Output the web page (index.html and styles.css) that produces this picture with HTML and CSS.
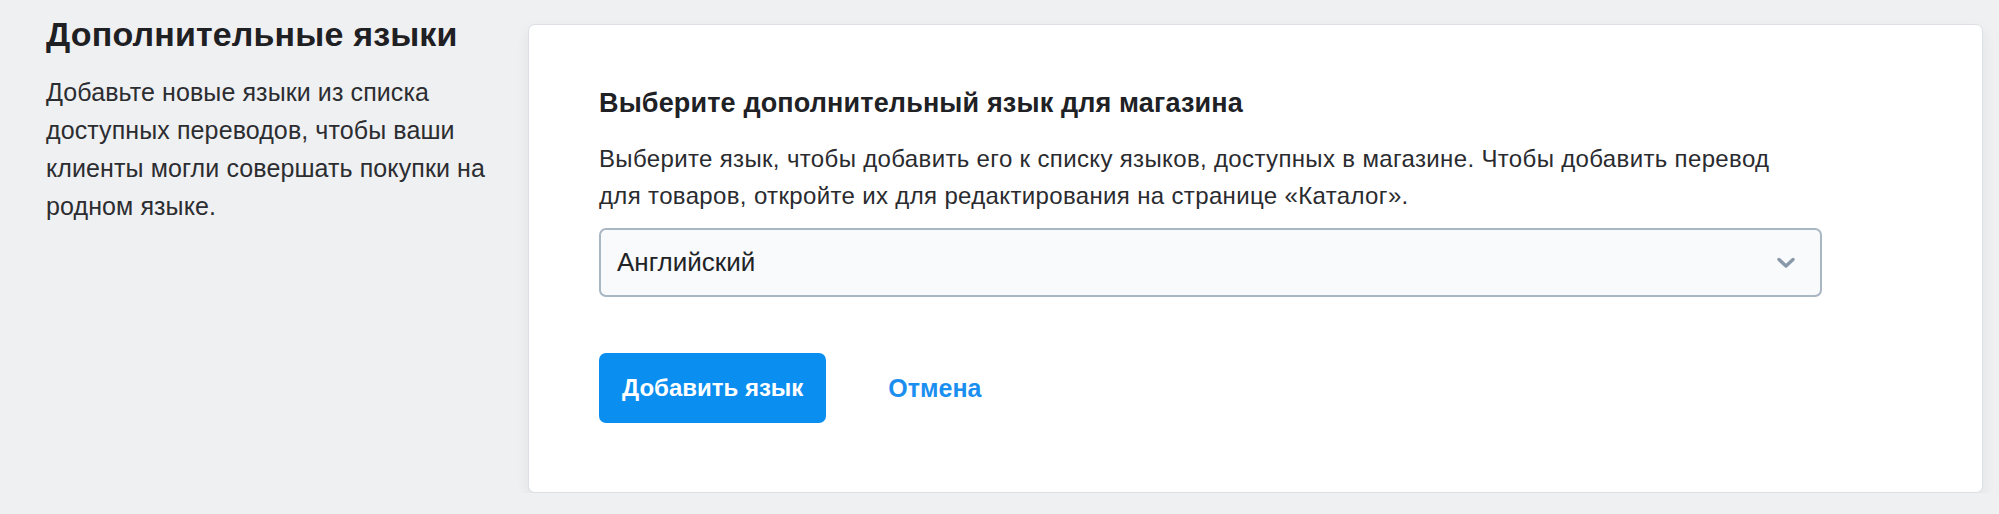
FILE: index.html
```html
<!DOCTYPE html>
<html lang="ru">
<head>
    <meta charset="UTF-8">
    <meta name="viewport" content="width=device-width, initial-scale=1.0">
    <title>Дополнительные языки</title>
    <link rel="stylesheet" href="styles.css">
</head>
<body>
    <div class="settings_row">
        <div class="settings_info">
            <h2 class="info_tit">Дополнительные языки</h2>
            <p class="info_txt">Добавьте новые языки из списка доступных переводов, чтобы ваши клиенты могли совершать покупки на родном языке.</p>
        </div>
        <div class="card">
            <h3 class="card_tit">Выберите дополнительный язык для магазина</h3>
            <p class="card_txt">Выберите язык, чтобы добавить его к списку языков, доступных в магазине. Чтобы добавить перевод для товаров, откройте их для редактирования на странице «Каталог».</p>
            <div class="select_box">
                <span class="select_val">Английский</span>
                <svg class="select_arrow" width="20" height="12" viewBox="0 0 20 12">
                    <polyline points="3,2.5 10,9 17,2.5" fill="none" stroke="#8a99aa" stroke-width="3.4" stroke-linecap="round" stroke-linejoin="round"/>
                </svg>
            </div>
            <div class="btn_box">
                <button type="button" class="btn_add">Добавить язык</button>
                <a href="#" class="btn_cancel">Отмена</a>
            </div>
        </div>
    </div>
</body>
</html>
```

FILE: styles.css
```css
* { box-sizing: border-box; }
body { margin: 0; background-color: #eff0f2; font-family: "Liberation Sans", Arial, sans-serif; color: #222327; }

.settings_row { display: flex; align-items: flex-start; padding: 14px 16px 0 46px; }
.settings_info { width: 482px; flex-shrink: 0; padding-right: 14px; }
.info_tit { margin: 0; font-size: 34px; line-height: 41px; font-weight: bold; color: #1f2023; letter-spacing: 0.15px; }
.info_txt { margin: 18px 0 0; font-size: 25px; line-height: 38px; color: #2c2d31; letter-spacing: 0.1px; }

.card { flex: 1; margin-top: 10px; padding: 62px 160px 69px 70px; background: #fff; border: 1px solid #dce0e5; border-radius: 7px; box-shadow: 0 6px 14px rgba(30, 40, 60, 0.07); }
.card_tit { margin: 0; font-size: 27px; line-height: 33px; font-weight: bold; color: #202125; letter-spacing: 0.15px; }
.card_txt { max-width: 1195px; margin: 20px 0 0; font-size: 24px; line-height: 37px; color: #2a2b2f; letter-spacing: 0.35px; }

.select_box { display: flex; align-items: center; justify-content: space-between; height: 69px; margin-top: 14px; padding: 0 24px 0 16px; background: #f9fafb; border: 2px solid #a9b6c3; border-radius: 7px; }
.select_val { font-size: 26px; color: #222327; }
.select_arrow { display: block; }

.btn_box { display: flex; align-items: center; gap: 62px; margin-top: 56px; }
.btn_add { height: 70px; padding: 0 23px; border: 0; border-radius: 7px; background: #0a8ef0; color: #fff; font-family: inherit; font-size: 24px; font-weight: bold; }
.btn_cancel { font-size: 25px; font-weight: bold; color: #1b8ff0; text-decoration: none; }
```
